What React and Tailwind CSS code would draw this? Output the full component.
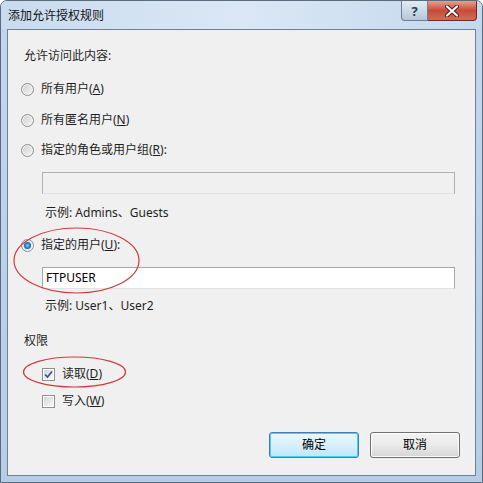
import React from "react";

const font = { fontFamily: '"Noto Sans", "Noto Sans CJK SC", sans-serif' };

export default function App() {
  return (
    <div
      className="relative w-[483px] h-[483px] bg-linear-to-b from-[#c2d7ee] to-[#b6cde8] rounded-t-[7px] border border-[#5c6b7c] flex flex-col text-[12px] text-[#1e1e1e] leading-[16px] overflow-hidden"
      style={font}
    >
      {/* TITLE BAR */}
      <div className="h-[28px] flex items-start bg-linear-to-r from-[#c9dbef] via-[#dbe7f5] to-[#c4d8ee]">
        <div className="pl-[7px] pt-[7px] text-[12px] text-[#111]">添加允许授权规则</div>
        <div className="ml-auto mr-[5px] flex">
          <div className="w-[27px] h-[20px] rounded-bl-[4px] border border-t-0 border-[#6d7f95] bg-linear-to-b from-[#e2ebf4] to-[#b6c7d9] flex items-center justify-center text-[13px] font-bold text-[#2b3b50]">
            ?
          </div>
          <div className="w-[49px] h-[20px] rounded-br-[4px] border border-l-0 border-t-0 border-[#6b2a22] bg-linear-to-b from-[#e4a08e] via-[#c7493a] to-[#d46a55] flex items-center justify-center">
            <svg width="14" height="12" viewBox="0 0 14 12">
              <path d="M2 1.5 L12 10.5 M12 1.5 L2 10.5" stroke="#4a1a14" strokeWidth="4" strokeLinecap="round" />
              <path d="M2 1.5 L12 10.5 M12 1.5 L2 10.5" stroke="#ffffff" strokeWidth="2.2" strokeLinecap="round" />
            </svg>
          </div>
        </div>
      </div>

      {/* CLIENT AREA */}
      <div className="flex-1 mx-[6px] mb-[6px] border border-[#6d8096] bg-[#f0f0f0] flex flex-col pt-[18px]">
        <div className="pl-[16px]">允许访问此内容:</div>

        <RadioRow className="mt-[17px]" label="所有用户(" mn="A" tail=")" />
        <RadioRow className="mt-[15px]" label="所有匿名用户(" mn="N" tail=")" />
        <RadioRow className="mt-[14px]" label="指定的角色或用户组(" mn="R" tail="):" />

        <div className="mt-[14px] ml-[34px] w-[413px] h-[22px] border border-[#b0b0b0] border-b-[#e3e3e3] bg-[#f0f0f0]" />
        <div className="mt-[11px] pl-[37px] text-[#1e1e1e]">示例: Admins、Guests</div>

        <RadioRow className="mt-[16px]" label="指定的用户(" mn="U" tail="):" checked />

        <div className="mt-[14px] ml-[34px] w-[413px] h-[22px] border border-[#a8a8a8] border-b-[#e3e3e3] bg-white flex items-center px-[3px] text-black">
          FTPUSER
        </div>
        <div className="mt-[9px] pl-[37px]">示例: User1、User2</div>

        <div className="mt-[19px] pl-[16px]">权限</div>

        <CheckRow className="mt-[17px]" label="读取(" mn="D" tail=")" checked />
        <CheckRow className="mt-[11px]" label="写入(" mn="W" tail=")" />

        <div className="mt-[23px] flex justify-end gap-[11px] pr-[15px]">
          <button className="w-[90px] h-[26px] rounded-[3px] border border-[#3c7fb1] bg-linear-to-b from-[#eaf6fd] via-[#d9f0fc] to-[#bee6fd] shadow-[inset_0_0_0_1px_#48d0f7] text-black">
            确定
          </button>
          <button className="w-[90px] h-[26px] rounded-[3px] border border-[#707070] bg-linear-to-b from-[#f2f2f2] via-[#ebebeb] to-[#d5d5d5] shadow-[inset_0_0_0_1px_#fcfcfc] text-black">
            取消
          </button>
        </div>
      </div>

      {/* annotation ellipses */}
      <svg className="absolute left-0 top-0 pointer-events-none" width="483" height="483">
        <ellipse cx="75.5" cy="259.5" rx="62.5" ry="32.5" fill="none" stroke="#d23a3a" strokeWidth="1.2" />
        <ellipse cx="73.5" cy="371" rx="51" ry="15" fill="none" stroke="#d23a3a" strokeWidth="1.2" />
      </svg>
    </div>
  );
}

function RadioRow({ className, label, mn, tail, checked }) {
  return (
    <div className={"flex items-center pl-[13px] h-[16px] " + className}>
      <div className="w-[13px] h-[13px] rounded-full border border-[#8e8f8f] bg-linear-to-br from-[#cfcfcf] to-[#f6f6f6] shadow-[inset_0_0_0_1px_#f4f4f4] flex items-center justify-center">
        {checked && (
          <div className="w-[7px] h-[7px] rounded-full bg-radial from-[#7fd3ff] via-[#1f7fc6] to-[#0e4c87]" />
        )}
      </div>
      <span className="ml-[7px]">
        {label}
        <span className="underline">{mn}</span>
        {tail}
      </span>
    </div>
  );
}

function CheckRow({ className, label, mn, tail, checked }) {
  return (
    <div className={"flex items-center pl-[34px] h-[16px] " + className}>
      <div className="w-[13px] h-[13px] border border-[#8e8f8f] bg-white p-[1px]">
        <div className="w-full h-full bg-linear-to-br from-[#d6d6d6] to-[#f8f8f8] flex items-center justify-center">
          {checked && (
            <svg width="9" height="9" viewBox="0 0 9 9">
              <path d="M1 4.5 L3.5 7 L8 1.5" fill="none" stroke="#2b4f9c" strokeWidth="1.6" />
            </svg>
          )}
        </div>
      </div>
      <span className="ml-[7px]">
        {label}
        <span className="underline">{mn}</span>
        {tail}
      </span>
    </div>
  );
}
